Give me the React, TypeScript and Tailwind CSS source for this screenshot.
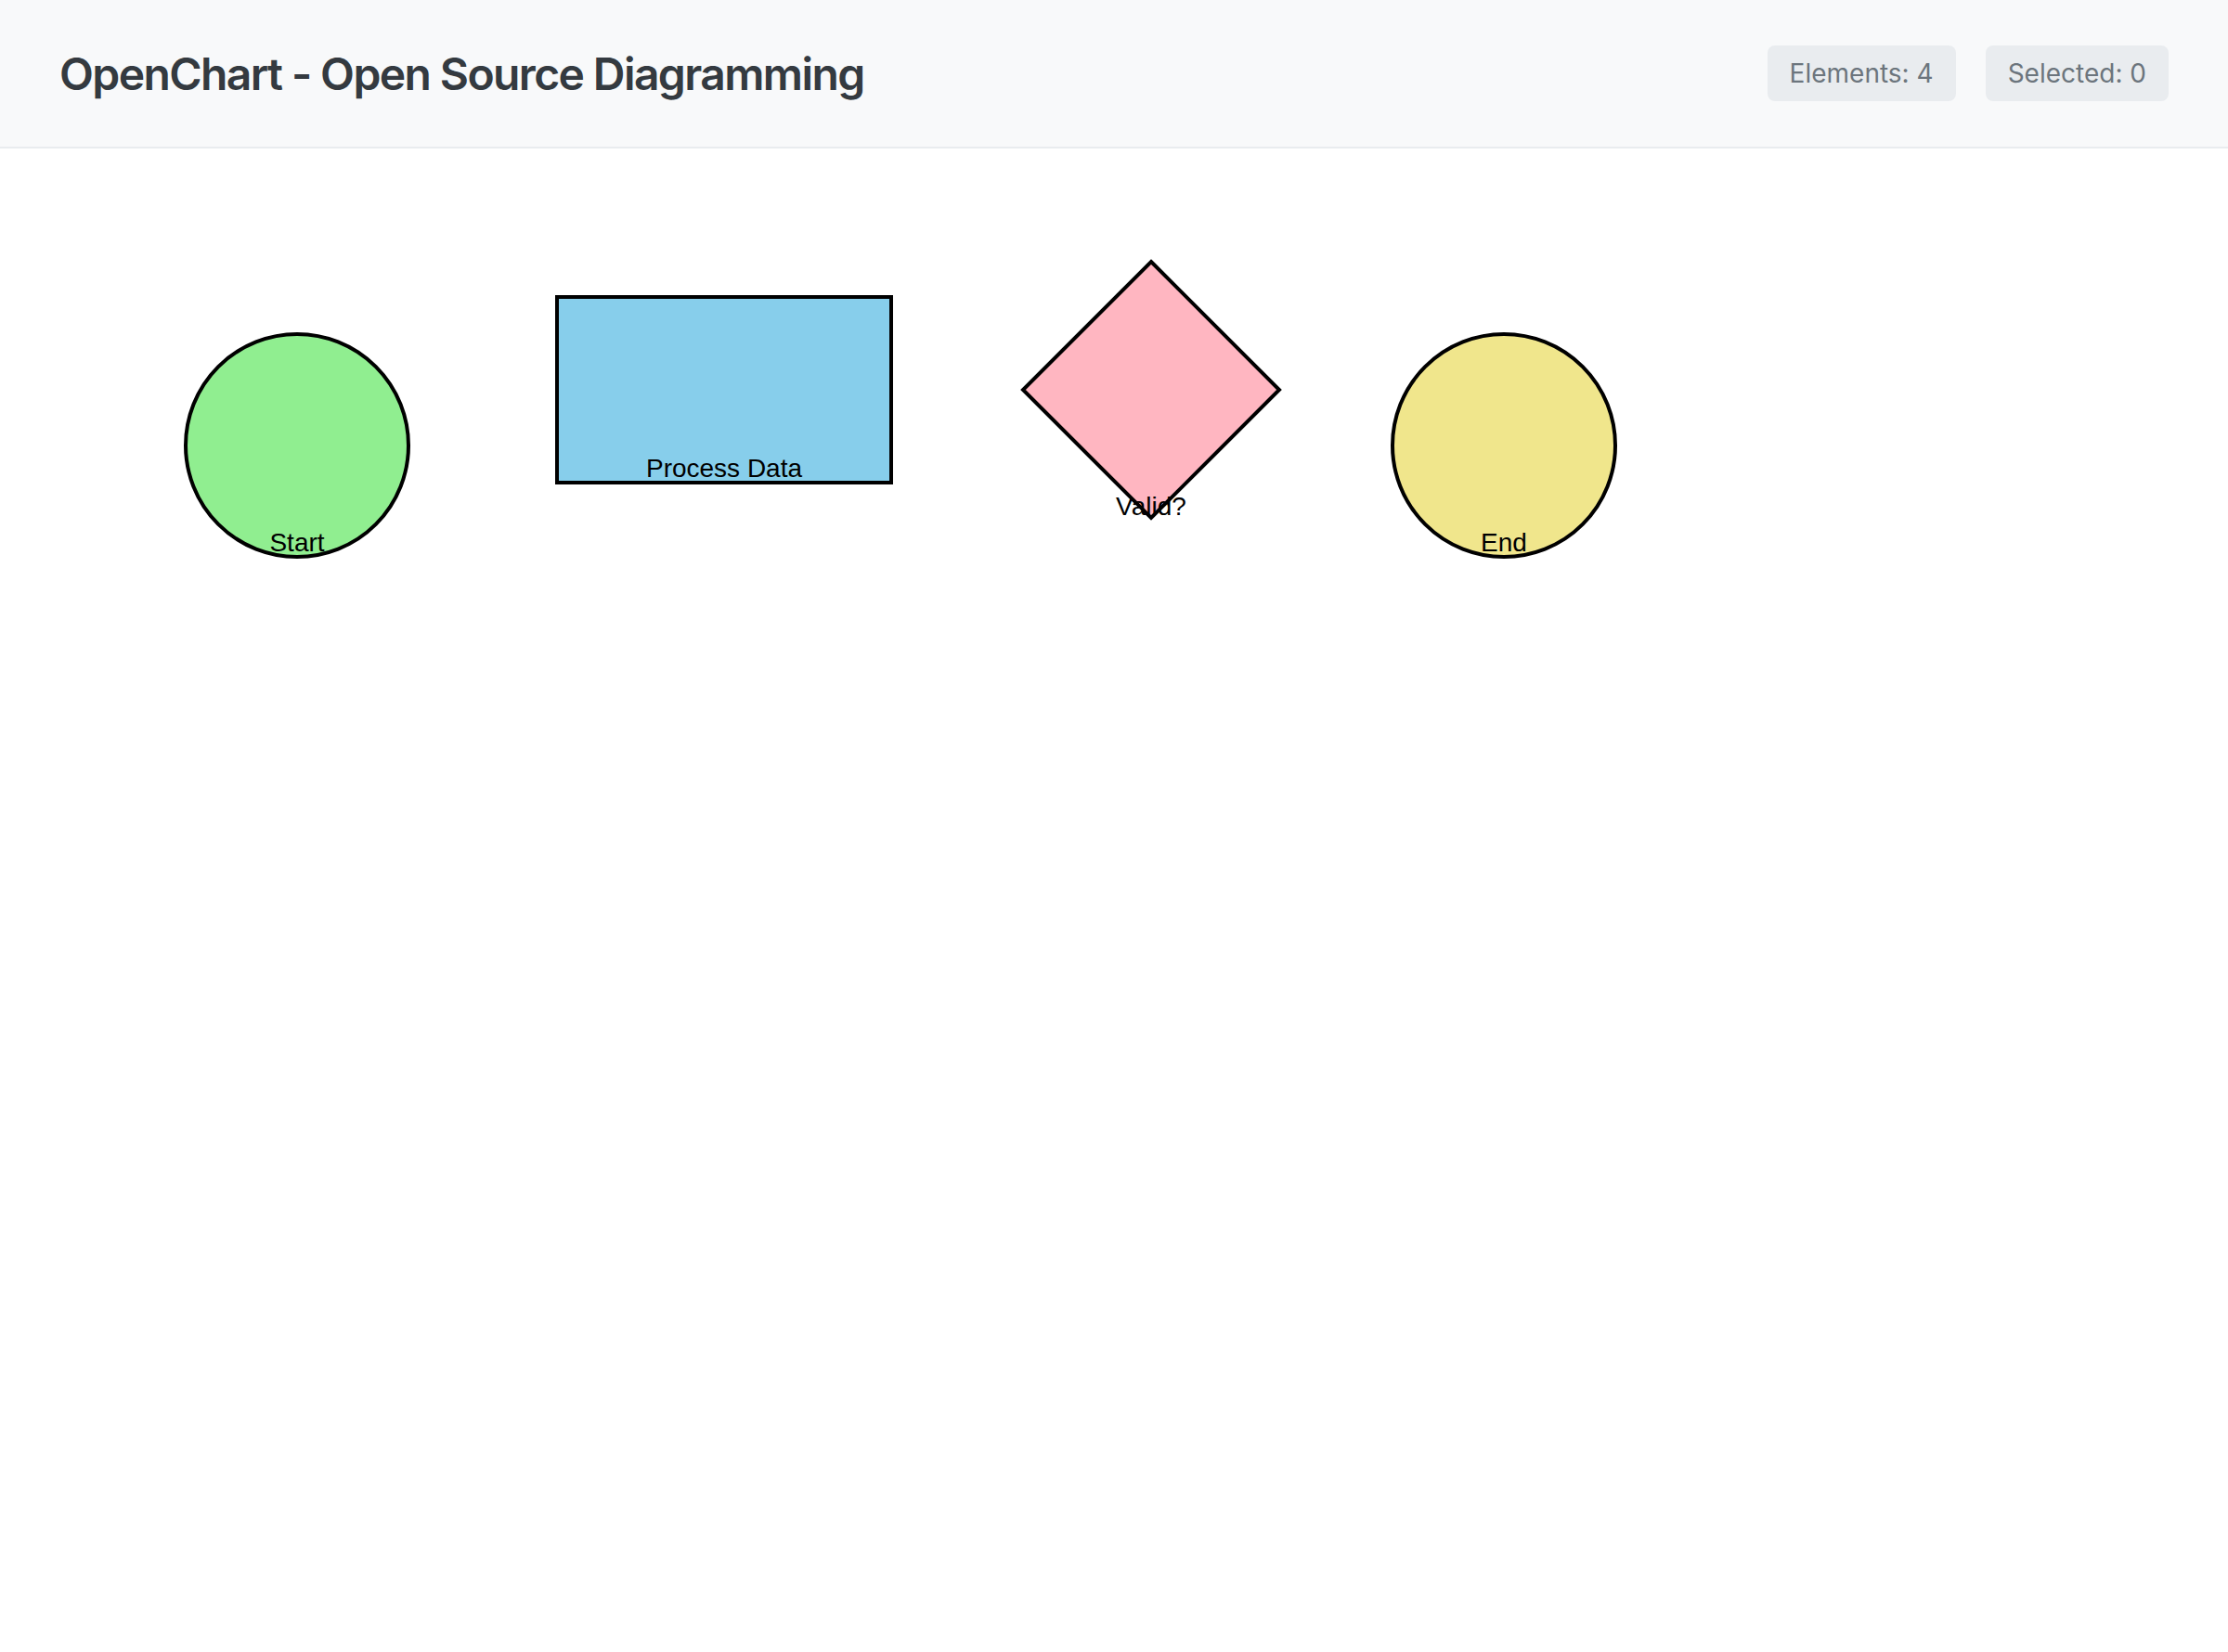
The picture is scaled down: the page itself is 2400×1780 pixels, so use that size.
import React from "react";

export default function App() {
  const label = "font-['Liberation_Sans',Arial,sans-serif]";
  return (
    <div className="min-h-[1780px] w-full bg-white">
      <header className="flex h-[160px] items-center justify-between border-b-2 border-[#e9ecef] bg-[#f8f9fa] px-[64px] font-['Inter',sans-serif]">
        <h1 className="pt-[2px] text-[48px] font-semibold leading-none tracking-[-1.6px] text-[#343a40]">
          OpenChart - Open Source Diagramming
        </h1>
        <div className="flex items-center gap-[32px]">
          <span className="flex h-[60px] items-center rounded-[8px] bg-[#e9ecef] px-[24px] text-[28px] text-[#6c757d]">
            Elements: 4
          </span>
          <span className="flex h-[60px] items-center rounded-[8px] bg-[#e9ecef] px-[24px] text-[28px] text-[#6c757d]">
            Selected: 0
          </span>
        </div>
      </header>
      <main className="w-full">
        <svg width="2400" height="1620" className="block">
          <g stroke="#000" strokeWidth={4}>
            <circle cx={320} cy={320} r={120} fill="#90ee90" />
            <rect x={600} y={160} width={360} height={200} fill="#87ceeb" />
            <polygon points="1240,122 1378,260 1240,398 1102,260" fill="#ffb6c1" />
            <circle cx={1620} cy={320} r={120} fill="#f0e68c" />
          </g>
          <g className={label} fontSize={28} fill="#000" textAnchor="middle">
            <text x={320} y={434}>Start</text>
            <text x={780} y={354}>Process Data</text>
            <text x={1240} y={395}>Valid?</text>
            <text x={1620} y={434}>End</text>
          </g>
        </svg>
      </main>
    </div>
  );
}
